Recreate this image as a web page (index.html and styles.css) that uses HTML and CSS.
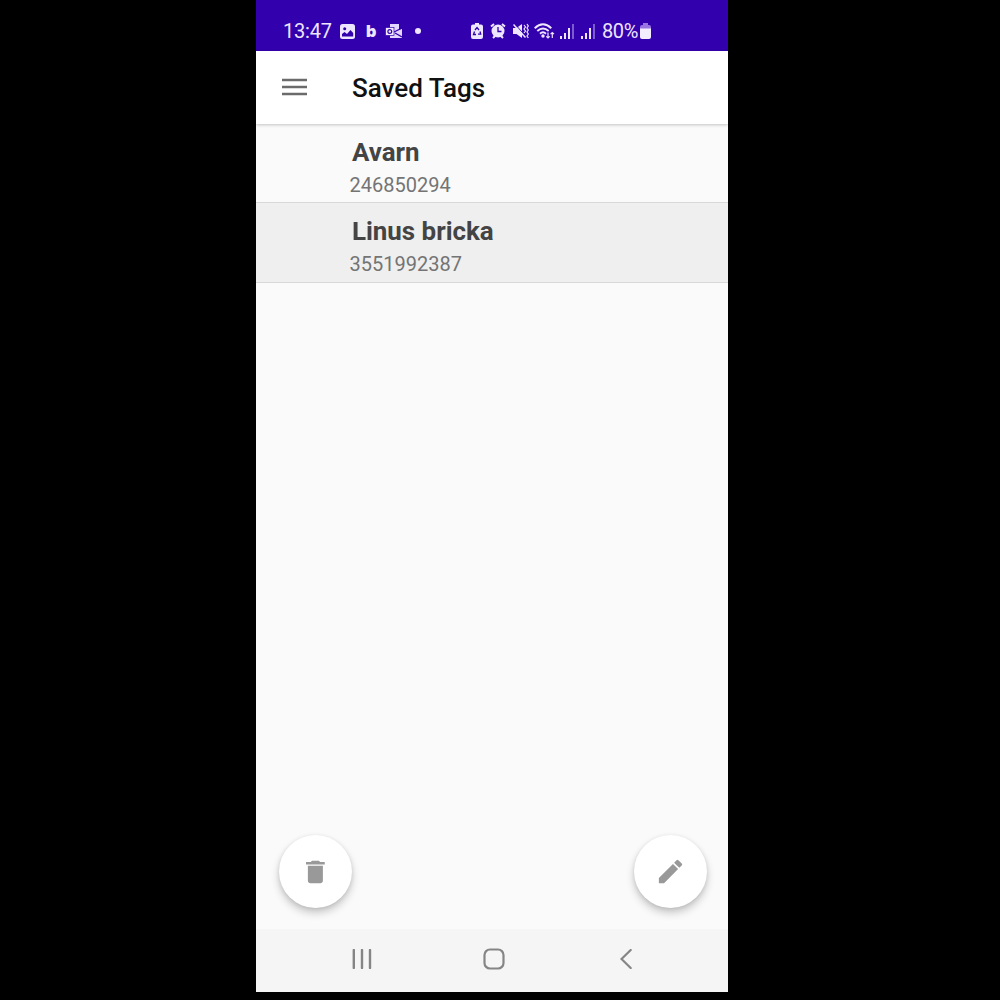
FILE: index.html
```html
<!DOCTYPE html>
<html lang="en">
<head>
<meta charset="utf-8">
<title>Saved Tags</title>
<link rel="stylesheet" href="styles.css">
</head>
<body>
<div class="phone">
  <header class="status">
    <div class="status-left">
      <span class="clock">13:47</span>
      <svg class="icon-photo" width="15" height="15" viewBox="0 0 15 15"><rect width="15" height="15" rx="2.5" fill="#eee5ff"/><circle cx="4.7" cy="4.7" r="1.5" fill="#3200ad"/><path d="M2 12.5V10l2.5-2 2.5 2 3.500-4 2.700 3v3.500z" fill="#3200ad"/></svg>
      <span class="b-badge">b</span>
      <svg class="icon-mail" width="17" height="15" viewBox="0 0 17 15"><path d="M5 0h9v6l3-1.500V14H5z" fill="#e2d5ff"/><path d="M9 8l8-4M10 9l7 4" stroke="#3200ad" stroke-width="1.300"/><rect x=".5" y="3.500" width="8.500" height="8" fill="#f3edff" stroke="#3200ad" stroke-width=".7"/><circle cx="4.800" cy="7.500" r="1.900" fill="none" stroke="#3200ad" stroke-width="1.200"/></svg>
      <i class="dot"></i>
    </div>
    <div class="status-right">
      <svg width="12" height="16" viewBox="0 0 12 16"><path d="M4 0h4v1.500h2a2 2 0 0 1 2 2V14a2 2 0 0 1-2 2H2a2 2 0 0 1-2-2V3.500a2 2 0 0 1 2-2h2z" fill="#eee5ff"/><path d="M4 7l2-2.500L8 7M9 8.500l.7 2.700H7M5 11.500H2.500L3.500 8.500" fill="none" stroke="#3200ad" stroke-width="1.300"/></svg>
      <svg class="icon-alarm" width="16" height="16" viewBox="0 0 16 16"><path d="M1 3.500L4 1M15 3.500L12 1M3 15l2-2M13 15l-2-2" stroke="#eee5ff" stroke-width="2"/><circle cx="8" cy="8" r="6.500" fill="#eee5ff"/><path d="M8 4v4.500h3.500" fill="none" stroke="#3200ad" stroke-width="1.300"/></svg>
      <svg class="icon-mute" width="16" height="16" viewBox="0 0 16 16"><path d="M0 5h3.500L9 1v14l-5.500-4H0z" fill="#eee5ff"/><path d="M2 1l12 14" stroke="#3200ad" stroke-width="1"/><path d="M.5 1.500l12 13" stroke="#eee5ff" stroke-width="1.500"/><path d="M11 2l1.500 2L11 6l1.500 2L11 10M14 1l1.300 2L14 5l1.300 2L14 9l1.300 2-1.300 2 1.300 2" fill="none" stroke="#eee5ff" stroke-width="1.200"/></svg>
      <svg class="icon-wifi" width="21" height="17" viewBox="0 0 21 17"><g fill="none" stroke="#eee5ff" stroke-width="1.900"><path d="M.7 5.200Q9 -2.600 17.300 5.200M3.300 8Q9 2.800 14.700 8M6 10.700Q9 8 12 10.700"/></g><circle cx="9" cy="13" r="1.700" fill="#eee5ff"/><path d="M14 9.500v5.500M12.300 13.300L14 15l1.700-1.700M18.300 15V9.500M16.600 11.200l1.700-1.700 1.700 1.700" fill="none" stroke="#eee5ff" stroke-width="1.200"/></svg>
      <svg class="icon-signal" width="14" height="15" viewBox="0 0 14 15"><g fill="#eee5ff"><path d="M0 12h2v3H0zM4 9h2v6H4zM8 4h2v11H8z"/><path d="M12 0h2v15H12z" opacity=".4"/></g></svg>
      <svg class="icon-signal2" width="14" height="15" viewBox="0 0 14 15"><g fill="#eee5ff"><path d="M0 12h2v3H0zM4 9h2v6H4zM8 4h2v11H8z"/><path d="M12 0h2v15H12z" opacity=".4"/></g></svg>
      <span class="percent">80%</span>
      <svg width="11" height="16" viewBox="0 0 11 16"><path d="M3 0h5v2h1a2 2 0 0 1 2 2v2H0V4a2 2 0 0 1 2-2h1z" fill="#9875e0"/><path d="M0 5.500h11V14a2 2 0 0 1-2 2H2a2 2 0 0 1-2-2z" fill="#f3edff"/></svg>
    </div>
  </header>
  <div class="appbar">
    <svg width="25" height="18" viewBox="0 0 25 18"><path d="M0 2h25M0 9h25M0 16h25" stroke="#6b6b6b" stroke-width="2.400"/></svg>
    <h1>Saved Tags</h1>
  </div>
  <main class="content">
    <ul class="tags">
      <li class="tag"><strong>Avarn</strong><span>246850294</span></li>
      <li class="tag selected"><strong>Linus bricka</strong><span>3551992387</span></li>
    </ul>
    <div class="actions">
      <button class="fab" aria-label="Delete"><svg width="30" height="30" viewBox="0 0 24 24"><path d="M5.500 19c0 1.100.9 2 2 2h8c1.100 0 2-.9 2-2V7h-12v12zM19 4h-3.700l-1-1h-5.500l-1 1H4v2h15V4z" fill="#999"/></svg></button>
      <button class="fab" aria-label="Edit"><svg width="31" height="31" viewBox="0 0 24 24"><path d="M3 17v4h4L17.900 10.100l-4-4L3 17zM20.710 7.300a1 1 0 0 0 0-1.410l-2.600-2.600a1 1 0 0 0-1.410 0l-1.900 1.900 4 4 1.910-1.890z" fill="#999"/></svg></button>
    </div>
  </main>
  <nav class="navbar">
    <svg width="20" height="20" viewBox="0 0 20 20"><path d="M1.800 1v18M10 1v18M18 1v18" stroke="#858585" stroke-width="2.400" stroke-linecap="round"/></svg>
    <svg class="home" width="22" height="22" viewBox="0 0 22 22"><rect x="1.500" y="1.500" width="19" height="19" rx="5.500" fill="none" stroke="#858585" stroke-width="2.200"/></svg>
    <svg class="back" width="12" height="20" viewBox="0 0 12 20"><path d="M10.700 1L1.500 10l9.200 9" fill="none" stroke="#858585" stroke-width="2.200" stroke-linecap="round"/></svg>
  </nav>
</div>
</body>
</html>
```
FILE: styles.css
```css
* { box-sizing: border-box; }
body { margin: 0; background: #000; font-family: Roboto, "Liberation Sans", sans-serif; }
svg { display: block; flex: none; }
.phone { width: 472px; height: 992px; margin-left: 256px; background: #fafafa; display: flex; flex-direction: column; }
.status { height: 51px; flex: none; padding: 11px 77px 0 27px; background: #3200ad; color: #eee5ff; display: flex; justify-content: space-between; font-size: 20px; line-height: 40px; }
.status-left, .status-right { height: 40px; display: flex; align-items: center; }
.clock { width: 48px; margin-right: 9px; letter-spacing: -.2px; }
.b-badge { width: 11px; margin: 0 8px 0 11px; font: 900 16px/20px Inter, sans-serif; }
.dot { width: 6px; height: 6px; margin-left: 13px; border-radius: 50%; background: #eee5ff; }
.icon-alarm { margin-left: 7px; }
.icon-mute { margin-left: 7px; }
.icon-wifi { margin-left: 5px; }
.icon-signal { margin-left: 5px; }
.icon-signal2 { margin-left: 7px; }
.percent { width: 38px; margin-left: 7px; letter-spacing: -.4px; }
.appbar { height: 73px; flex: none; display: flex; align-items: center; padding: 0 0 1px 26px; background: #fff; box-shadow: 0 1px 3px rgba(0,0,0,.22); position: relative; }
h1 { margin: 1px 0 0 45px; font-size: 26px; line-height: 30px; font-weight: 500; color: #111; }
.content { flex: 1; display: flex; flex-direction: column; justify-content: space-between; }
.tags { margin: 0; padding: 0; list-style: none; }
.tag { height: 79px; padding: 13px 0 0 93.5px; border-bottom: 1px solid #d8d8d8; display: flex; flex-direction: column; }
.tag strong { padding-left: 2.5px; font-size: 25.9px; line-height: 30px; font-weight: 700; color: #444; }
.tag span { margin-top: 6px; font-size: 20px; line-height: 24px; color: #747474; }
.selected { height: 80px; background: #efefef; }
.actions { display: flex; justify-content: space-between; padding: 0 21px 21px 23px; }
.fab { width: 73px; height: 73px; padding: 0; border: 0; border-radius: 50%; background: #fff; box-shadow: 0 5px 8px rgba(0,0,0,.2), 0 1px 4px rgba(0,0,0,.1); display: flex; align-items: center; justify-content: center; }
.navbar { height: 63px; flex: none; display: flex; align-items: center; padding: 0 0 3px 96px; background: #f5f5f5; }
.home { margin-left: 111px; }
.back { margin-left: 115px; }
```
